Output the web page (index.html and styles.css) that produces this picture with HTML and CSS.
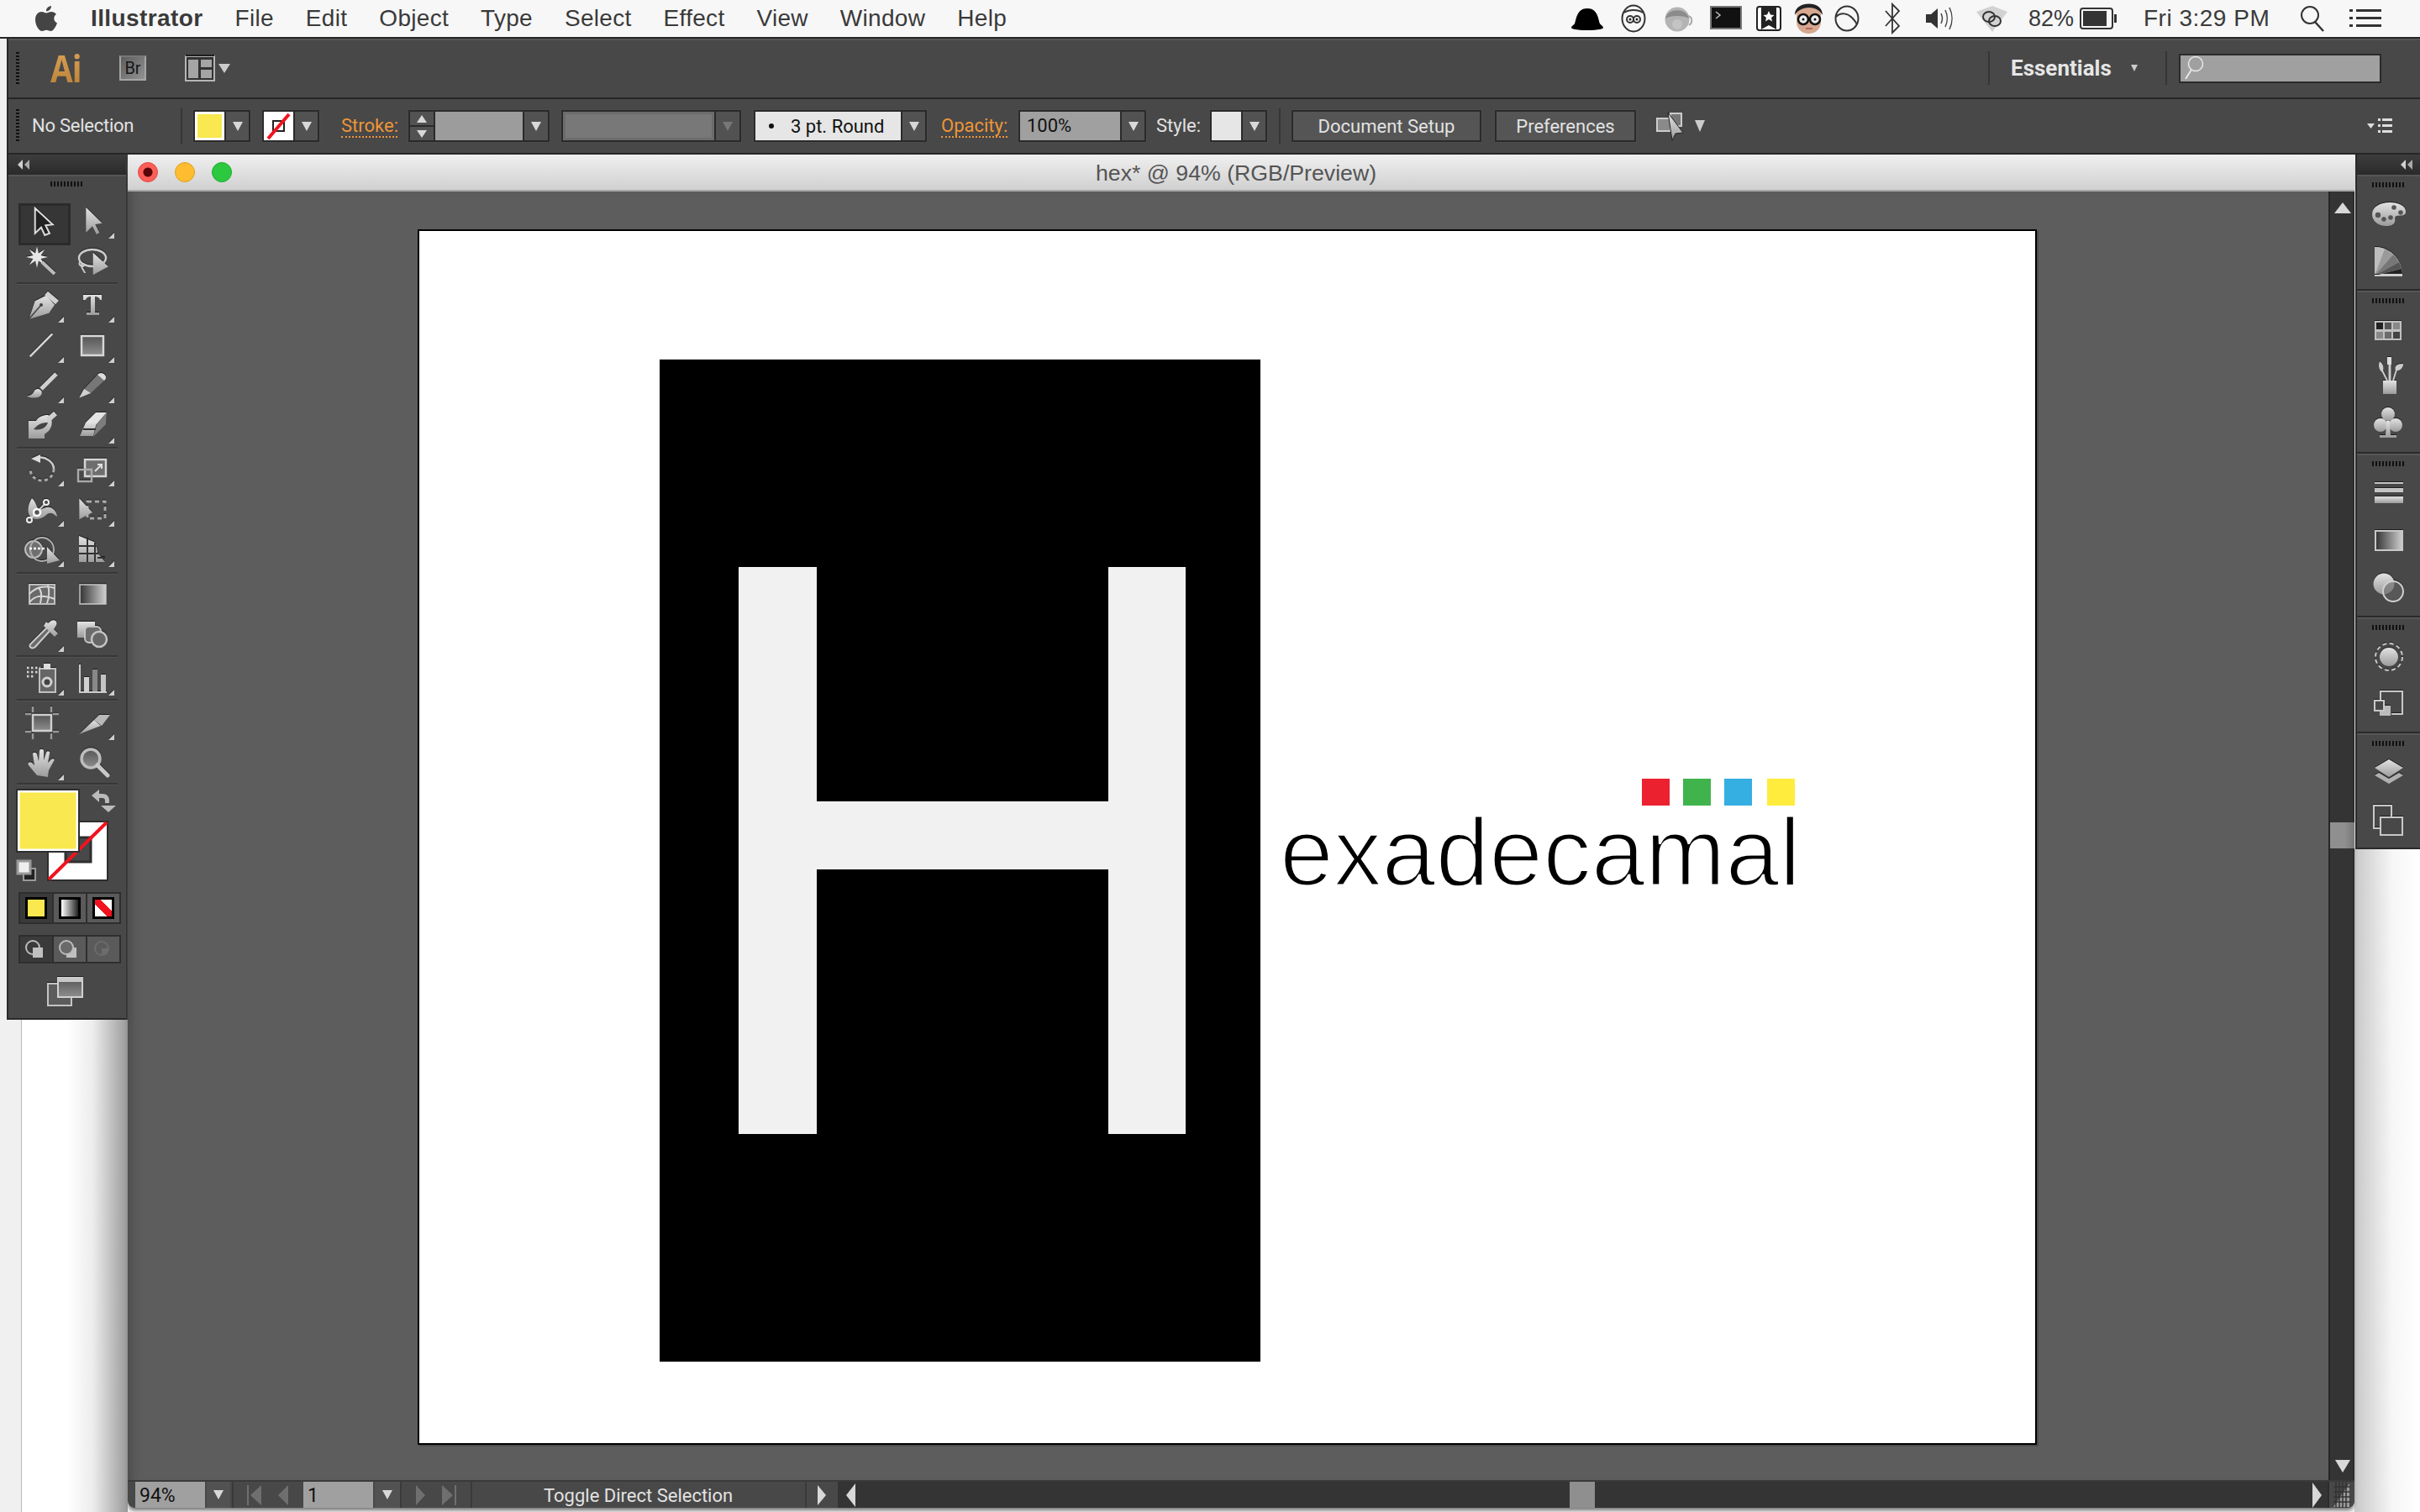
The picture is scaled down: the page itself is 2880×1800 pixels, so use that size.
FILE: index.html
```html
<!DOCTYPE html>
<html lang="en">
<head>
<meta charset="utf-8">
<title>Illustrator</title>
<link rel="stylesheet" href="styles.css">
</head>
<body>
<svg class="defs" aria-hidden="true"><defs>
<linearGradient id="ig" x1="0" y1="0" x2="0" y2="1"><stop offset="0" stop-color="#e2e2e2"/><stop offset="1" stop-color="#9c9c9c"/></linearGradient>
<linearGradient id="ih" x1="0" y1="0" x2="0" y2="1"><stop offset="0" stop-color="#555"/><stop offset="1" stop-color="#8e8e8e"/></linearGradient>
<linearGradient id="ix" x1="0" y1="0" x2="1" y2="0"><stop offset="0" stop-color="#333"/><stop offset="1" stop-color="#cfcfcf"/></linearGradient>
</defs></svg>

<header class="menubar">
  <svg class="apple" viewBox="0 0 26 32"><path d="M19 1c.3 3-2.600 6.600-6 6.300C12.700 4.300 15.700 1.200 19 1zM25 11c-4 2.500-3.500 8.500 1 10.400-1.500 4-4.500 9.600-7.500 9.600-2 0-3-1.300-5.300-1.300S10 31 8 31C4 31 0 23.500 0 17.500 0 11 4 8 7.500 8c2.300 0 4 1.500 5.500 1.500S16.500 8 19 8c2.500 0 4.600 1 6 3z"/></svg>
  <nav class="menus">
    <span class="app-name">Illustrator</span><span>File</span><span>Edit</span><span>Object</span><span>Type</span><span>Select</span><span>Effect</span><span>View</span><span>Window</span><span>Help</span>
  </nav>
  <div class="extras">
    <svg class="strip" viewBox="0 0 530 44">
      <path d="M1 33c0-2 3-3 4-5 2-4 2-18 15-18s13 14 15 18c1 2 4 3 4 5 0 1-5 3-19 3S1 34 1 33z" fill="#000" transform="translate(1,0)"/>
      <g fill="none" stroke="#333" stroke-width="2"><ellipse cx="76" cy="22" rx="13.500" ry="15.500"/><path d="M65 15c6-4 16-4 22 0"/><circle cx="72" cy="23" r="4"/><circle cx="80" cy="23" r="4"/></g><circle cx="72" cy="23" r="1.500" fill="#222"/><circle cx="80" cy="23" r="1.500" fill="#222"/>
      <circle cx="128" cy="23" r="14.500" fill="#b4b4b4"/><path d="M114 22c3-13 25-13 28 0-6-4-22-4-28 0z" fill="#8b8b8b"/><circle cx="128" cy="29" r="6" fill="#c4c4c4"/><path d="M141 19c5 1 6 8 1 11" fill="none" stroke="#aaa" stroke-width="2"/>
      <rect x="168" y="8" width="36" height="26" fill="#111" stroke="#777" stroke-width="2"/><path d="M174 14l5 4-5 4" fill="none" stroke="#bbb" stroke-width="1.500"/>
      <rect x="223" y="8" width="28" height="28" rx="3" fill="#fff" stroke="#222" stroke-width="2"/><path d="M228 9h18v26l-9-5-9 5z" fill="#222"/><path d="M237 13l2 4.500 4.500.500-3.500 3 1 4.500-4-2.500-4 2.500 1-4.500-3.500-3 4.500-.500z" fill="#fff"/>
      <path d="M270 12c2-9 27-9 29 0v14c0 8-6 14-14.500 14S270 34 270 26z" fill="#d6a88f"/><path d="M268 18c-1-17 33-19 33 0-3-6-10-9-16-9s-14 3-17 9z" fill="#222"/><g fill="#eee" stroke="#111" stroke-width="2.500"><circle cx="278" cy="23" r="6"/><circle cx="292" cy="23" r="6"/></g><circle cx="278" cy="23" r="1.500" fill="#111"/><circle cx="292" cy="23" r="1.500" fill="#111"/><path d="M281 34h8" stroke="#a55" stroke-width="1.500"/>
      <g fill="none" stroke="#333" stroke-width="2"><ellipse cx="330" cy="22" rx="13.500" ry="14.500"/><path d="M317 20c6-6 14-4 19 1 3 3 5 6 6 8"/></g>
      <path d="M376 13l16 18-8 8V5l8 8-16 18" fill="none" stroke="#333" stroke-width="1.800"/>
      <path d="M424 17h6l8-7v24l-8-7h-6z" fill="#333"/><path d="M442 16c2 4 2 8 0 12M447 12c3 6 3 14 0 20M452 9c4 8 4 18 0 26" fill="none" stroke="#444" stroke-width="1.500"/>
      <path d="M484 14l19-7 18 7-18 24z" fill="#d2d2d2"/><g fill="none" stroke="#333" stroke-width="2"><ellipse cx="499" cy="20" rx="7" ry="6"/><ellipse cx="506" cy="25" rx="7" ry="6"/></g>
    </svg>
    <span class="pct">82%</span>
    <svg class="battery" viewBox="0 0 46 26"><rect x="1" y="1" width="38" height="24" rx="3" fill="none" stroke="#333" stroke-width="2"/><rect x="4" y="4" width="28" height="18" fill="#333"/><rect x="41" y="8" width="3" height="10" fill="#333"/></svg>
    <span class="clock">Fri 3:29 PM</span>
    <svg class="spot" viewBox="0 0 30 32"><circle cx="12" cy="12" r="10" fill="none" stroke="#333" stroke-width="2"/><path d="M18 20l10 11" stroke="#333" stroke-width="2.500"/></svg>
    <svg class="notif" viewBox="0 0 38 24"><g fill="#333"><rect x="0" y="1" width="4" height="3"/><rect x="8" y="1" width="30" height="3"/><rect x="0" y="10" width="4" height="3"/><rect x="8" y="10" width="30" height="3"/><rect x="0" y="19" width="4" height="3"/><rect x="8" y="19" width="30" height="3"/></g></svg>
  </div>
</header>

<div class="chrome">
  <section class="appbar">
    <i class="grip-v"></i>
    <span class="ai-logo">Ai</span>
    <span class="br-logo">Br</span>
    <svg class="layout-ic" viewBox="0 0 36 32"><rect x="1" y="2" width="34" height="29" fill="#333" stroke="#b5b5b5" stroke-width="2"/><path d="M1 1h34" stroke="#1f1f1f" stroke-width="2"/><g fill="#a5a5a5"><rect x="4" y="6" width="12" height="22"/><rect x="19" y="6" width="13" height="9"/><rect x="19" y="18" width="13" height="10"/></g></svg>
    <i class="tri tri-layout"></i>
    <div class="app-right">
      <i class="vsep"></i>
      <span class="essentials">Essentials</span>
      <i class="tri tri-small"></i>
      <i class="vsep vsep-b"></i>
      <div class="search"><svg class="search-ic" viewBox="0 0 24 30"><circle cx="14" cy="10" r="8.500" fill="none" stroke="#e8e8e8" stroke-width="1.500"/><path d="M9 17L2 28" stroke="#e8e8e8" stroke-width="2"/></svg></div>
    </div>
  </section>

  <section class="controlbar">
    <i class="grip-c"></i>
    <span class="t nosel">No Selection</span>
    <i class="csep"></i>
    <div class="combo w-swatch m13"><i class="swatch-fill"></i><i class="arrow"></i></div>
    <div class="combo w-swatch m14"><svg class="swatch-stroke" viewBox="0 0 35 34"><rect width="35" height="34" fill="#fff"/><rect x="11" y="11" width="13" height="12" fill="none" stroke="#222" stroke-width="2"/><path d="M5 32L30 3" stroke="#f0131f" stroke-width="4"/></svg><i class="arrow"></i></div>
    <span class="link l-stroke">Stroke:</span>
    <div class="combo w-spin"><div class="spin"><i class="up"></i><i class="down"></i></div><i class="field f-grey"></i><i class="arrow"></i></div>
    <div class="combo w-dis"><i class="field f-dis"></i><i class="arrow arrow-off"></i></div>
    <div class="combo w-prof"><div class="field f-light prof"><i class="dot"></i><span>3 pt. Round</span></div><i class="arrow"></i></div>
    <span class="link l-op">Opacity:</span>
    <div class="combo w-op"><div class="field f-grey2 op">100%</div><i class="arrow"></i></div>
    <span class="t l-style">Style:</span>
    <div class="combo w-swatch m13"><i class="field f-light"></i><i class="arrow"></i></div>
    <i class="csep csep-b"></i>
    <button class="btn b-doc">Document Setup</button>
    <button class="btn b-pref">Preferences</button>
    <svg class="align-ic" viewBox="0 0 32 34"><rect x="1" y="8" width="16" height="15" fill="#8a8a8a" stroke="#ccc" stroke-width="2"/><rect x="17" y="2" width="13" height="15" fill="#777" stroke="#ccc" stroke-width="2"/><path d="M14 1l18 24-9 1-4 8z" fill="url(#ig)" stroke="#222" stroke-width="1"/></svg>
    <i class="tri tri-align"></i>
    <svg class="pm-ic" viewBox="0 0 30 20"><path d="M0 7h9l-4.500 6z" fill="#ddd"/><g fill="#ddd"><rect x="13" y="1" width="3" height="3"/><rect x="18" y="1" width="12" height="3"/><rect x="13" y="8" width="3" height="3"/><rect x="18" y="8" width="12" height="3"/><rect x="13" y="15" width="3" height="3"/><rect x="18" y="15" width="12" height="3"/></g></svg>
  </section>

  <main class="workspace">
    <aside class="leftcol">
      <div class="toolcol">
        <div class="collapse"><i class="dbl"></i></div>
        <div class="toolbox">
          <i class="handle handle-tools"></i>
          <div class="tools s1">
            <div class="tool on"><svg class="ic" viewBox="0 0 60 48"><path d="M21.700 8.700v30l7.300-7 4.300 9.300 5.700-2.300-4.700-9.400 8.400-1z" fill="#222" stroke="#ddd" stroke-width="2"/></svg></div>
            <div class="tool"><svg class="ic" viewBox="0 0 60 48"><path d="M22.300 7.700v30l7.700-7.400 5 9.700 3.300-2.300-5-9.700 8.400-1.300z" fill="url(#ig)"/><path class="c" d="M56 38v7h-7z"/></svg></div>
            <div class="tool"><svg class="ic" viewBox="0 0 60 48"><path d="M37 19l-8.400-1.900 4.600-7.300-7.300 4.600L24 6l-1.900 8.400-7.300-4.600 4.600 7.300L11 19l8.400 1.900-4.600 7.300 7.300-4.600L24 32l1.900-8.400 7.300 4.600-4.600-7.300z" fill="#e6e6e6"/><path d="M30 25l15 14" stroke="#bbb" stroke-width="4"/></svg></div>
            <div class="tool"><svg class="ic" viewBox="0 0 60 48"><ellipse cx="30" cy="20" rx="16" ry="10" fill="none" stroke="#ccc" stroke-width="2.500"/><path d="M15 24c-2 5 3 7 5 5s-4-3-3 1 4 6 4 8" fill="none" stroke="#ccc" stroke-width="2"/><path d="M30.700 13.700v26.600L49 30.300z" fill="url(#ig)"/></svg></div>
          </div>
          <div class="tools s2">
            <div class="tool"><svg class="ic" viewBox="0 0 60 48"><path d="M14.300 41l7.400-21.700L35 12.700l10 11-6.700 10z" fill="url(#ig)"/><path d="M14.300 41L29 24" stroke="#444" stroke-width="1.500"/><circle cx="29" cy="24" r="2" fill="#444"/><path d="M35 10l13 11" stroke="#d0d0d0" stroke-width="6"/><path class="c" d="M56 38v7h-7z"/></svg></div>
            <div class="tool"><svg class="ic" viewBox="0 0 60 48"><path d="M19 18v-6h22v6h-2c-1-3-3-4-6-4v19h5v3H23v-3h5V14c-3 0-5 1-6 4z" fill="url(#ig)"/><path class="c" d="M56 38v7h-7z"/></svg></div>
            <div class="tool"><svg class="ic" viewBox="0 0 60 48"><path d="M15.700 37.300L42.300 10.300" stroke="#d4d4d4" stroke-width="2.500"/><path class="c" d="M56 38v7h-7z"/></svg></div>
            <div class="tool"><svg class="ic" viewBox="0 0 60 48"><rect x="17" y="13" width="26" height="23" fill="url(#ih)" stroke="#d8d8d8" stroke-width="2.500"/><path class="c" d="M56 38v7h-7z"/></svg></div>
            <div class="tool"><svg class="ic" viewBox="0 0 60 48"><path d="M29 28L47 10" stroke="#d0d0d0" stroke-width="5"/><path d="M12 36c5 0 7-2 9-6 3-3 6-2 8 0 2 3 0 7-4 8-5 1-10 1-13-2z" fill="url(#ig)"/><path class="c" d="M56 38v7h-7z"/></svg></div>
            <div class="tool"><svg class="ic" viewBox="0 0 60 48"><path d="M14.300 38.500L20 28l16-17c3-3 9-2 10 3 0 2-1 3-2 4L28 33z" fill="#777"/><path d="M36 11c3-3 9-2 10 3 0 2-1 3-2 4z" fill="#ddd"/><path d="M14.300 38.500L20 28l8 5z" fill="#d0d0d0"/><path class="c" d="M56 38v7h-7z"/></svg></div>
            <div class="tool"><svg class="ic" viewBox="0 0 60 48"><path d="M14 18h9c3-5 8-7 14-7l3 2c3 6 2 12-2 17l-5 4v5H14z" fill="url(#ig)"/><path d="M20 28c4-4 7-8 17-8-2 6-8 10-17 8z" fill="#444"/><path d="M37 17l9-8" stroke="#cfcfcf" stroke-width="6"/></svg></div>
            <div class="tool"><svg class="ic" viewBox="0 0 60 48"><path d="M22 20L34 8h13L35 22z" fill="#e4e4e4"/><path d="M22 20h13l-4 16H15z" fill="url(#ig)"/><path d="M35 22L47 8l-1 14-15 15z" fill="#7d7d7d"/><path d="M19 28h15" stroke="#333" stroke-width="2"/><path class="c" d="M56 38v7h-7z"/></svg></div>
          </div>
          <div class="tools s3">
            <div class="tool"><svg class="ic" viewBox="0 0 60 48"><path d="M25 11c9-2 19 5 19 13" fill="none" stroke="#ccc" stroke-width="2.500"/><path d="M44 24c0 8-6 14-14 14s-14-6-14-14" fill="none" stroke="#aaa" stroke-width="3" stroke-dasharray="4 3.500"/><path d="M17 12l11-5v10z" fill="#ddd"/><path class="c" d="M56 38v7h-7z"/></svg></div>
            <div class="tool"><svg class="ic" viewBox="0 0 60 48"><rect x="21" y="13" width="25" height="20" fill="#6e6e6e" stroke="#d6d6d6" stroke-width="2.500"/><rect x="13" y="25" width="16" height="14" fill="none" stroke="#aaa" stroke-width="2.500"/><path d="M33 27l8-8m-5 0h5v5" fill="none" stroke="#e0e0e0" stroke-width="2"/><path class="c" d="M56 38v7h-7z"/></svg></div>
            <div class="tool"><svg class="ic" viewBox="0 0 60 48"><path d="M18 11c-5 8-6 16-2 22 6 5 14 3 19-2 3-3 7-3 10 0l3 2c0-6-6-13-13-11-4 1-6 3-9 2-3-2-3-9-8-13z" fill="url(#ig)"/><path d="M15 37l20-21" stroke="#ccc" stroke-width="2"/><g fill="#444" stroke="#f0f0f0" stroke-width="2"><circle cx="15" cy="37" r="3"/><circle cx="35" cy="16" r="3"/></g><circle cx="24" cy="28" r="4" fill="#555" stroke="#fff" stroke-width="2.500"/><path class="c" d="M56 38v7h-7z"/></svg></div>
            <div class="tool"><svg class="ic" viewBox="0 0 60 48"><rect x="24" y="15" width="21" height="20" fill="none" stroke="#aaa" stroke-width="3" stroke-dasharray="5 4"/><path d="M14.300 11.300v25L30 28z" fill="url(#ig)"/><path class="c" d="M56 38v7h-7z"/></svg></div>
            <div class="tool"><svg class="ic" viewBox="0 0 60 48"><circle cx="20" cy="24" r="10" fill="#6f6f6f" stroke="#bbb" stroke-width="2"/><circle cx="30" cy="24" r="14" fill="none" stroke="#b0b0b0" stroke-width="2"/><path d="M15 23h20" stroke="#fff" stroke-width="2.500" stroke-dasharray="3 2"/><path d="M36 21v20l15-4z" fill="url(#ig)"/><path class="c" d="M56 38v7h-7z"/></svg></div>
            <div class="tool"><svg class="ic" viewBox="0 0 60 48"><path d="M14 8l20 8 2 12 9 11H14z" fill="url(#ig)"/><path d="M24 11v28M33 16v23M14 20h21M14 29h23M36 34h9" stroke="#333" stroke-width="2"/><path class="c" d="M56 38v7h-7z"/></svg></div>
          </div>
          <div class="tools s4">
            <div class="tool"><svg class="ic" viewBox="0 0 60 48"><rect x="15" y="13" width="30" height="23" fill="#6a6a6a" stroke="#bdbdbd" stroke-width="2"/><path d="M15 24c9-9 18-10 30-7M15 34c6-7 12-10 30-4M25 16c5 4 5 10 3 19M37 13c2 8 2 14-1 22" fill="none" stroke="#d6d6d6" stroke-width="2"/></svg></div>
            <div class="tool"><svg class="ic" viewBox="0 0 60 48"><rect x="15" y="13" width="31" height="23" fill="url(#ix)" stroke="#c8c8c8" stroke-width="1.500"/></svg></div>
            <div class="tool"><svg class="ic" viewBox="0 0 60 48"><path d="M37 15L16 36c-2 4 3 6 6 3l19-21" fill="#6b6b6b" stroke="#ccc" stroke-width="2"/><path d="M32 14l13 13 4-4-5-5 3-5c2-5-3-7-6-5l-4 3-2-2z" fill="url(#ig)"/><path class="c" d="M56 38v7h-7z"/></svg></div>
            <div class="tool"><svg class="ic" viewBox="0 0 60 48"><rect x="12" y="9" width="21" height="19" fill="url(#ig)"/><rect x="21" y="15" width="19" height="19" rx="5" fill="#6d6d6d" stroke="#c4c4c4" stroke-width="2"/><circle cx="38" cy="30" r="9" fill="#666" stroke="#c4c4c4" stroke-width="2.500"/></svg></div>
          </div>
          <div class="tools s5">
            <div class="tool"><svg class="ic" viewBox="0 0 60 48"><rect x="27" y="13" width="19" height="28" fill="#666" stroke="#c0c0c0" stroke-width="2"/><rect x="32" y="7" width="8" height="7" fill="#ddd"/><circle cx="36" cy="29" r="5" fill="#444" stroke="#d0d0d0" stroke-width="3"/><path d="M12 12h16M12 17h14M12 22h10" stroke="#cfcfcf" stroke-width="3" stroke-dasharray="2.500 2.500"/><path class="c" d="M56 38v7h-7z"/></svg></div>
            <div class="tool"><svg class="ic" viewBox="0 0 60 48"><path d="M15 8v33h32" fill="none" stroke="#ccc" stroke-width="2"/><rect x="20" y="23" width="6" height="17" fill="#d0d0d0"/><rect x="30" y="14" width="6" height="26" fill="#888"/><rect x="40" y="20" width="6" height="20" fill="#c4c4c4"/><path class="c" d="M56 38v7h-7z"/></svg></div>
          </div>
          <div class="tools s6">
            <div class="tool"><svg class="ic" viewBox="0 0 60 48"><rect x="19" y="15" width="22" height="19" fill="url(#ih)" stroke="#cfcfcf" stroke-width="2.500"/><path d="M10 14h7M10 35h7M43 14h7M43 35h7M19 5v7M19 37v7M41 5v7M41 37v7" stroke="#999" stroke-width="2.500"/></svg></div>
            <div class="tool"><svg class="ic" viewBox="0 0 60 48"><path d="M14 38l18-17 8 7z" fill="url(#ig)"/><path d="M32 21l6-6h13L41 28z" fill="#b8b8b8"/><path class="c" d="M56 38v7h-7z"/></svg></div>
            <div class="tool"><svg class="ic" viewBox="0 0 60 48"><path d="M24 39L14 27c-2-3 1-5 4-3l3 3-2-13c0-3 4-3 5 0l2 8 1-12c0-3 5-3 5 0v11l3-9c1-3 5-2 4 1l-2 11 4-4c2-2 5 0 3 2l-6 11-1 8z" fill="url(#ig)"/><path class="c" d="M56 38v7h-7z"/></svg></div>
            <div class="tool"><svg class="ic" viewBox="0 0 60 48"><circle cx="28" cy="19" r="11" fill="url(#ih)" stroke="#bdbdbd" stroke-width="3.500"/><path d="M36 27l12 12" stroke="#c8c8c8" stroke-width="5" stroke-linecap="round"/></svg></div>
          </div>
          <svg class="fillstroke" viewBox="0 0 124 112">
            <rect x="37" y="39" width="71" height="70" fill="#fff" stroke="#2e2e2e" stroke-width="2"/>
            <rect x="58" y="58" width="30" height="29" fill="#484848" stroke="#2e2e2e" stroke-width="3"/>
            <path d="M38 108L107 40" stroke="#f0131f" stroke-width="4"/>
            <rect x="2" y="3" width="70" height="70" fill="#f9e84f" stroke="#fff" stroke-width="3"/>
            <rect x="0" y="1" width="74" height="74" fill="none" stroke="#2e2e2e" stroke-width="2"/>
            <path d="M89 8l9-7v5h4c5 0 8 3 8 8v3h-5v-3c0-2-1-3-3-3h-4v5z" fill="#bbb"/><path d="M100 20h18l-9 8z" fill="#bbb"/>
            <rect x="8" y="95" width="14" height="14" fill="#222" stroke="#999" stroke-width="2"/>
            <rect x="1" y="86" width="15" height="15" fill="#eee" stroke="#999" stroke-width="3"/>
          </svg>
          <div class="modes m-a">
            <div class="mode on"><i class="mini m-yellow"></i></div>
            <div class="mode"><i class="mini m-grad"></i></div>
            <div class="mode"><i class="mini m-none"></i></div>
          </div>
          <div class="modes m-b">
            <div class="mode on"><svg class="dm" viewBox="0 0 30 26"><circle cx="11" cy="11" r="8" fill="none" stroke="#bbb" stroke-width="2"/><rect x="11" y="11" width="12" height="12" fill="#c0c0c0"/></svg></div>
            <div class="mode"><svg class="dm" viewBox="0 0 30 26"><rect x="11" y="11" width="12" height="12" fill="#c0c0c0"/><circle cx="11" cy="11" r="8" fill="#6a6a6a" stroke="#bbb" stroke-width="2"/></svg></div>
            <div class="mode"><svg class="dm" viewBox="0 0 30 26"><circle cx="13" cy="12" r="8" fill="none" stroke="#6c6c6c" stroke-width="2"/><rect x="13" y="12" width="7" height="7" fill="#6c6c6c"/></svg></div>
          </div>
          <svg class="ic screenmode" viewBox="0 0 44 36"><rect x="1" y="9" width="28" height="26" fill="#5c5c5c" stroke="#c4c4c4" stroke-width="2"/><rect x="13" y="2" width="29" height="23" fill="url(#ih)" stroke="#d0d0d0" stroke-width="2"/><rect x="13" y="2" width="29" height="5" fill="#c8c8c8"/></svg>
        </div>
      </div>
      <div class="behind"></div>
    </aside>

    <section class="doc">
      <div class="doctitle">
        <div class="lights"><i class="l-red"></i><i class="l-amber"></i><i class="l-green"></i></div>
        <span class="doctitle-text">hex* @ 94% (RGB/Preview)</span>
      </div>
      <div class="docmain">
        <div class="canvas">
          <div class="artboard">
            <div class="black-rect">
              <i class="h-left"></i><i class="h-right"></i><i class="h-bar"></i>
            </div>
            <div class="dots"><i class="d-red"></i><i class="d-green"></i><i class="d-blue"></i><i class="d-yellow"></i></div>
            <span class="wordmark">exadecamal</span>
          </div>
        </div>
        <div class="vscroll">
          <i class="v-up"></i>
          <i class="v-thumb"></i>
          <i class="v-down"></i>
        </div>
      </div>
      <footer class="statusbar">
        <div class="st-combo st-zoom"><span class="st-field">94%</span><i class="arrow"></i></div>
        <div class="st-nav"><svg class="nav-ic" viewBox="0 0 84 26"><g fill="#6f6f6f"><rect x="17" y="1" width="2" height="24"/><path d="M34 1v24L21 13zM66 1v24L54 13z"/></g></svg></div>
        <div class="st-combo st-page"><span class="st-field">1</span><i class="arrow"></i></div>
        <div class="st-nav"><svg class="nav-ic" viewBox="0 0 84 26"><g fill="#6f6f6f"><path d="M19 1v24l11-12zM50 1v24l13-12z"/><rect x="65" y="1" width="2" height="24"/></g></svg></div>
        <div class="st-label">Toggle Direct Selection</div>
        <div class="st-next"><i class="tri-r"></i></div>
        <div class="hscroll"><i class="tri-l"></i><i class="h-thumb"></i><i class="tri-r tri-end"></i></div>
        <div class="resize"><svg viewBox="0 0 20 32" class="resize-ic"><path d="M19 2v28H0z" fill="#9a9a9a"/><path d="M3 0v32M7 0v32M11 0v32M15 0v32M0 6h20M0 12h20M0 18h20M0 24h20" stroke="#333" stroke-width="1.500"/></svg></div>
      </footer>
    </section>

    <aside class="rightcol">
      <div class="rp-col">
        <div class="collapse collapse-r"><i class="dbl"></i></div>
        <div class="rp-group pb5">
          <i class="handle"></i>
          <div class="rp"><svg class="ic" viewBox="0 0 60 56"><path d="M10 28c0-9 10-14 21-14s19 4 19 11c0 6-7 4-11 5-3 1-1 4-2 7-1 4-6 5-10 5-10 0-17-6-17-14z" fill="url(#ig)"/><g fill="#555"><circle cx="36" cy="20" r="2.800"/><circle cx="44" cy="26" r="2.800"/><circle cx="17" cy="29" r="3.200"/><circle cx="24" cy="34" r="2.800"/><circle cx="32" cy="32" r="2.800"/></g></svg></div>
          <div class="rp"><svg class="ic" viewBox="0 0 60 56"><path d="M13 45V11a33 33 0 0 1 33 34z" fill="#d2d2d2"/><path d="M13 45V11a33 33 0 0 1 12 2z" fill="#bdbdbd"/><path d="M13 45L25 13a33 33 0 0 1 10 7z" fill="#9a9a9a"/><path d="M13 45l22-25a33 33 0 0 1 7 9z" fill="#777"/><path d="M13 45l29-16a33 33 0 0 1 3 8z" fill="#555"/><path d="M13 45l32-8a33 33 0 0 1 1 6H13z" fill="#222"/><path d="M13 45h33" stroke="#ccc" stroke-width="2"/></svg></div>
        </div>
        <div class="rp-group pb5">
          <i class="handle"></i>
          <div class="rp"><svg class="ic" viewBox="0 0 60 56"><rect x="13" y="17" width="32" height="23" fill="#c0c0c0"/><rect x="15" y="19" width="8" height="8" fill="#222"/><rect x="25" y="19" width="8" height="8" fill="#555"/><rect x="35" y="19" width="8" height="8" fill="#888"/><rect x="15" y="30" width="8" height="8" fill="#888"/><rect x="25" y="30" width="8" height="8" fill="#6b6b6b"/><rect x="35" y="30" width="8" height="8" fill="#444"/></svg></div>
          <div class="rp"><svg class="ic" viewBox="0 0 60 56"><rect x="23" y="32" width="16" height="16" fill="url(#ig)"/><path d="M28 32L22 20" stroke="#ccc" stroke-width="2"/><path d="M22 22c-4-3-5-8-3-13 4 3 6 8 3 13z" fill="#ccc"/><path d="M31 32V10" stroke="#ccc" stroke-width="3"/><rect x="28" y="4" width="5" height="9" fill="#ddd"/><path d="M35 32l4-13" stroke="#ccc" stroke-width="2"/><path d="M38 20c-2-5 1-8 9-8 0 5-4 9-9 8z" fill="#ccc"/></svg></div>
          <div class="rp"><svg class="ic" viewBox="0 0 60 56"><g fill="url(#ig)"><circle cx="29" cy="16" r="8"/><circle cx="20" cy="29" r="8"/><circle cx="38" cy="29" r="8"/><path d="M27 24h4l1 17h7v3H19v-3h7z"/></g></svg></div>
        </div>
        <div class="rp-group pb6">
          <i class="handle"></i>
          <div class="rp"><svg class="ic" viewBox="0 0 60 56"><rect x="13" y="15" width="34" height="2" fill="#c4c4c4"/><rect x="13" y="22" width="34" height="5" fill="#c4c4c4"/><rect x="13" y="32" width="34" height="8" fill="url(#ig)"/></svg></div>
          <div class="rp"><svg class="ic" viewBox="0 0 60 56"><rect x="14" y="17" width="32" height="23" fill="url(#ix)" stroke="#c8c8c8" stroke-width="2"/></svg></div>
          <div class="rp"><svg class="ic" viewBox="0 0 60 56"><circle cx="24" cy="24" r="12.500" fill="url(#ig)"/><circle cx="35" cy="33" r="12" fill="#6f6f6f" fill-opacity=".65" stroke="#d0d0d0" stroke-width="2"/></svg></div>
        </div>
        <div class="rp-group pb5">
          <i class="handle"></i>
          <div class="rp"><svg class="ic" viewBox="0 0 60 56"><circle cx="30" cy="28" r="11" fill="url(#ig)"/><circle cx="30" cy="28" r="16" fill="none" stroke="#c8c8c8" stroke-width="2" stroke-dasharray="5 3.400"/></svg></div>
          <div class="rp"><svg class="ic" viewBox="0 0 60 56"><path d="M20 26V13h26v27H33" fill="none" stroke="#c8c8c8" stroke-width="2"/><rect x="19" y="30" width="13" height="12" fill="#bbb"/><rect x="13" y="24" width="11" height="12" fill="#484848" stroke="#c8c8c8" stroke-width="2"/></svg></div>
        </div>
        <div class="rp-group pb5 last">
          <i class="handle"></i>
          <div class="rp"><svg class="ic" viewBox="0 0 60 56"><path d="M13 31l17 10 17-10-5-3-12 7-12-7z" fill="#b0b0b0"/><path d="M13 22l17-10 17 10-17 11z" fill="url(#ig)"/></svg></div>
          <div class="rp"><svg class="ic" viewBox="0 0 60 56"><rect x="12" y="11" width="21" height="27" fill="none" stroke="#c8c8c8" stroke-width="2"/><rect x="20" y="25" width="26" height="21" fill="#484848" stroke="#c8c8c8" stroke-width="2"/></svg></div>
        </div>
      </div>
      <div class="behind-r"></div>
    </aside>
  </main>
</div>
</body>
</html>
```
FILE: styles.css
```css
* { box-sizing: border-box; }
html, body { margin: 0; padding: 0; }
body {
  width: 2880px; height: 1800px; overflow: hidden;
  background: #f0f0f0;
  font-family: "Roboto", "Liberation Sans", sans-serif;
  display: flex; flex-direction: column;
}
i { display: block; font-style: normal; }
.defs { position: absolute; width: 0; height: 0; }

/* mac menu bar */
.menubar {
  height: 44px; flex: none; display: flex; align-items: center;
  background: #f7f7f7; color: #3a3a3a;
  font-family: "Liberation Sans", Arial, sans-serif; font-size: 28px; letter-spacing: .3px;
}
.apple { width: 26px; height: 32px; margin-left: 42px; fill: #444; flex: none; }
.menus { display: flex; gap: 38px; margin-left: 40px; white-space: nowrap; }
.app-name { font-weight: 700; letter-spacing: .4px; }
.extras { margin-left: auto; display: flex; align-items: center; }
.strip { width: 530px; height: 44px; flex: none; }
.pct { margin-left: 16px; width: 54px; letter-spacing: 0; font-size: 27px; }
.battery { width: 46px; height: 26px; margin-left: 7px; flex: none; }
.clock { margin-left: 30px; width: 150px; white-space: nowrap; letter-spacing: .5px; }
.spot { width: 30px; height: 32px; margin-left: 36px; flex: none; }
.notif { width: 38px; height: 24px; margin-left: 29px; margin-right: 46px; flex: none; }

/* app frame */
.chrome { flex: 1; display: flex; flex-direction: column; min-height: 0; padding-top: 2px; background: linear-gradient(#262626 0 2px, transparent 2px); }
.appbar, .controlbar {
  margin-left: 8px; flex: none; display: flex; align-items: center;
  background: #484848; border-left: 2px solid #262626;
  box-shadow: inset 0 2px 0 #565656;
}
.appbar { height: 72px; border-bottom: 2px solid #262626; }
.controlbar { height: 66px; border-bottom: 2px solid #262626; box-shadow: none; color: #e2e2e2; }
.grip-v, .grip-c {
  width: 4px; background: repeating-linear-gradient(#111 0 2px, transparent 2px 4px); flex: none;
}
.grip-v { height: 38px; margin-left: 9px; }
.grip-c { height: 40px; margin-left: 9px; }
.ai-logo {
  margin-left: 37px; width: 40px; font-family: "Open Sans", sans-serif; font-weight: 700; font-size: 44px; line-height: 44px;
  background: linear-gradient(#dca05a, #b98435); -webkit-background-clip: text; background-clip: text; color: transparent;
  transform: scaleX(.88); transform-origin: left center; letter-spacing: -1px; white-space: nowrap;
}
.br-logo {
  margin-left: 42px; width: 32px; height: 30px; flex: none;
  background: linear-gradient(135deg, #5d5d5d, #929292); border: 2px solid #a5a5a5; border-top-color: #777;
  color: #161616; font-size: 20px; line-height: 26px; text-align: center;
}
.layout-ic { width: 36px; height: 32px; margin-left: 46px; flex: none; }
.tri { width: 0; height: 0; border-style: solid; border-color: #ccc transparent transparent; flex: none; }
.tri-layout { border-width: 11px 7px 0; margin-left: 4px; }
.tri-small { border-width: 8px 4px 0; margin-left: 21px; }
.tri-align { border-width: 14px 6px 0; margin-left: 14px; }
.app-right { margin-left: auto; display: flex; align-items: center; }
.vsep { width: 2px; height: 40px; background: #353535; flex: none; }
.essentials { margin-left: 25px; width: 122px; font-weight: 700; font-size: 26px; color: #e6e6e6; white-space: nowrap; }
.vsep-b { margin-left: 33px; }
.search {
  margin-left: 14px; margin-right: 46px; width: 241px; height: 35px; background: #a0a0a0;
  border: 2px solid #2a2a2a; display: flex; align-items: center;
}
.search-ic { width: 24px; height: 30px; margin-left: 4px; }

/* control bar */
.t { font-size: 22px; white-space: nowrap; padding-bottom: 2px; }
.nosel { margin-left: 15px; width: 177px; letter-spacing: -.25px; }
.csep { width: 2px; height: 42px; background: #353535; flex: none; }
.csep-b { margin-left: 14px; }
.combo {
  height: 38px; display: flex; gap: 2px; padding: 2px; flex: none;
  background: #2a2a2a; box-shadow: 0 0 0 1px #4c4c4c;
}
.m13 { margin-left: 13px; }
.m14 { margin-left: 14px; }
.w-swatch { width: 68px; }
.swatch-fill { width: 35px; background: #f9e84f; border: 3px solid #fff; flex: none; }
.swatch-stroke { width: 35px; height: 34px; flex: none; }
.arrow {
  flex: 1; background: #525252; display: flex; align-items: center; justify-content: center;
}
.arrow::after {
  content: ""; width: 0; height: 0; border-style: solid;
  border-width: 11px 6px 0; border-color: #d8d8d8 transparent transparent;
}
.arrow-off::after { border-top-color: #777; }
.link {
  font-size: 22px; color: #ed9538; white-space: nowrap; flex: none;
  border-bottom: 2px dotted #ed9538; line-height: 25px;
}
.l-stroke { margin-left: 26px; width: 67px; }
.w-spin { width: 168px; margin-left: 13px; }
.spin { width: 28px; display: flex; flex-direction: column; gap: 2px; flex: none; }
.spin i { flex: 1; background: #525252; display: flex; align-items: center; justify-content: center; }
.spin .up::after { content: ""; border-style: solid; border-width: 0 6px 9px; border-color: transparent transparent #d8d8d8; }
.spin .down::after { content: ""; border-style: solid; border-width: 9px 6px 0; border-color: #d8d8d8 transparent transparent; }
.field { flex: none; }
.f-grey { width: 104px; background: #9c9c9c; }
.w-dis { width: 214px; margin-left: 14px; }
.f-dis { width: 180px; background: #787878; border: 3px solid #6c6c6c; }
.w-prof { width: 206px; margin-left: 15px; }
.f-light { background: #e6e6e6; }
.w-swatch .f-light { width: 35px; border: 3px solid #e6e6e6; }
.prof {
  width: 173px; display: flex; align-items: center; color: #111; font-size: 22px; white-space: nowrap;
}
.dot { width: 6px; height: 6px; background: #111; border-radius: 50%; margin-left: 16px; }
.prof span { margin-left: 20px; }
.l-op { margin-left: 17px; width: 79px; }
.w-op { width: 152px; margin-left: 13px; }
.f-grey2 { background: #a0a0a0; }
.op { width: 119px; color: #111; font-size: 22px; line-height: 33px; padding-left: 8px; }
.l-style { margin-left: 12px; width: 51px; }
.btn {
  height: 38px; flex: none; padding: 0; font: 22px "Roboto", sans-serif; color: #e2e2e2;
  background: #555; border: 2px solid #2a2a2a; box-shadow: 0 0 0 1px #4c4c4c;
}
.b-doc { width: 226px; margin-left: 13px; }
.b-pref { width: 168px; margin-left: 16px; }
.align-ic { width: 32px; height: 34px; margin-left: 24px; flex: none; }
.pm-ic { width: 30px; height: 20px; margin-left: auto; margin-right: 33px; flex: none; }

/* workspace */
.workspace { flex: 1; min-height: 0; display: flex; }
.leftcol {
  width: 152px; flex: none; display: flex; flex-direction: column;
  background: #f0f0f0;
}
.toolcol { margin-left: 8px; width: 144px; flex: none; background: #262626; }
.collapse {
  height: 24px; background: linear-gradient(#3d3d3d, #2a2a2a); display: flex; align-items: center;
  padding-left: 11px; border-left: 2px solid #262626;
}
.dbl { width: 14px; height: 12px; position: relative; }
.dbl::before, .dbl::after {
  content: ""; position: absolute; top: 0; border-style: solid; border-width: 6px 6px 6px 0;
  border-color: transparent #d0d0d0 transparent transparent;
}
.dbl::before { left: 0; }
.dbl::after { left: 8px; border-right-color: #aaa; }
.toolbox {
  height: 1006px; background: #484848; border: 2px solid #2a2a2a; border-top: 0;
  box-shadow: inset 0 2px 0 #565656; display: flex; flex-direction: column;
}
.handle {
  width: 38px; height: 6px; flex: none;
  background: repeating-linear-gradient(90deg, #111 0 2px, transparent 2px 4px);
}
.handle-tools { margin: 8px 0 17px 50px; }
.tools {
  margin-left: 10px; width: 120px; display: grid; grid-template-columns: 60px 60px; grid-auto-rows: 48px;
  border-bottom: 2px solid #363636; box-shadow: 0 1px 0 #525252;
}
.s1 { padding-bottom: 1px; }
.s2 { padding: 1px 0; }
.s3 { padding-bottom: 3px; }
.s4 { padding-bottom: 1px; }
.s5 { padding: 1px 0; }
.s6 { padding-top: 2px; }
.tool { display: flex; align-items: center; justify-content: center; position: relative; }
.tool.on::before {
  content: ""; position: absolute; left: 2px; top: 3px; width: 56px; height: 44px;
  background: #363636; border: 3px solid #2b2b2b;
}
.ic { display: block; width: 60px; height: 48px; position: relative; filter: drop-shadow(0 -1px 0 #1e1e1e); overflow: visible; }
.c { fill: #cfcfcf; }
.fillstroke { display: block; width: 124px; height: 112px; margin: 5px 0 0 10px; overflow: visible; flex: none; }
.modes {
  width: 122px; margin-left: 12px; display: flex; gap: 2px; background: #2e2e2e; padding: 2px; flex: none;
}
.m-a { height: 38px; margin-top: 11px; }
.m-b { height: 34px; margin-top: 13px; }
.mode { flex: 1; background: #5a5a5a; display: flex; align-items: center; justify-content: center; }
.mode.on { background: #3a3a3a; }
.mini { width: 26px; height: 26px; border: 3px solid #000; }
.m-yellow { background: #f9e84f; }
.m-grad { background: linear-gradient(90deg, #fff, #222); }
.m-none { background: linear-gradient(135deg, #fff 0 35%, #f0131f 35% 65%, #fff 65%); transform: scaleX(-1); }
.dm { width: 30px; height: 26px; }
.screenmode { width: 44px; height: 36px; margin: 15px 0 0 46px; flex: none; }
.behind {
  flex: 1; background: linear-gradient(90deg, #f0f0f0 0 25px, #b8b8b8 25px 26px, #fff 26px 80px, #ededed 110px, #9a9a9a 152px);
}

/* document window */
.doc {
  width: 2650px; height: 1611px; flex: none; display: flex; flex-direction: column;
  position: relative; z-index: 1; box-shadow: 0 4px 4px -1px #777; border-radius: 8px;
}
.doctitle {
  height: 44px; flex: none; display: flex; align-items: center;
  background: linear-gradient(#f0f0f0, #d0d0d0); border-bottom: 2px solid #a8a8a8; border-radius: 8px 8px 0 0;
}
.lights { display: flex; gap: 20px; margin-left: 12px; }
.lights i { width: 24px; height: 24px; border-radius: 50%; }
.l-red { background: radial-gradient(circle, #5a0606 0 5px, #fc5e58 6px); border: 1px solid #e0443e; }
.l-amber { background: #febc30; border: 1px solid #dea123; }
.l-green { background: #2cc840; border: 1px solid #1dad2b; }
.doctitle-text {
  margin-left: 1028px; padding-top: 2px; font-family: "Liberation Sans", sans-serif; font-size: 26.700px; color: #555; white-space: nowrap;
}
.docmain { flex: 1; min-height: 0; display: flex; }
.canvas {
  flex: 1; min-width: 0; background: #5d5d5d; padding: 45px 0 0 345px;
  box-shadow: inset 14px 0 12px -10px #4a4a4a;
}
.artboard {
  width: 1927px; height: 1447px; background: #fff; border: 2px solid #000;
  box-shadow: 2px 2px 0 #4c4c4c; position: relative;
}
.black-rect { position: absolute; left: 286px; top: 153px; width: 715px; height: 1193px; background: #000; }
.black-rect i { position: absolute; background: #f1f1f1; }
.h-left { left: 94px; top: 247px; width: 93px; height: 675px; }
.h-right { left: 534px; top: 247px; width: 92px; height: 675px; }
.h-bar { left: 187px; top: 526px; width: 347px; height: 81px; }
.dots i { position: absolute; top: 652px; width: 33px; height: 32px; }
.d-red { left: 1455px; background: #ec2130; }
.d-green { left: 1504px; background: #41b34d; }
.d-blue { left: 1553px; background: #35aee2; }
.d-yellow { left: 1604px; background: #ffec3c; }
.wordmark {
  position: absolute; left: 1024px; top: 682px; font-family: "Liberation Sans", Arial, sans-serif;
  font-size: 115px; line-height: 115px; color: #000; white-space: nowrap;
  -webkit-text-stroke: 3px #fff;
}
.vscroll {
  width: 31px; flex: none; background: #343434; border-left: 2px solid #262626; display: flex; flex-direction: column; align-items: center;
  box-shadow: inset -2px 0 0 #2c2c2c;
}
.v-up { width: 0; height: 0; border-style: solid; border-width: 0 10px 13px; border-color: transparent transparent #d8d8d8; margin-top: 13px; flex: none; }
.v-thumb { width: 29px; height: 31px; background: linear-gradient(90deg, #8f8f8f 60%, #777); margin-top: 725px; flex: none; }
.v-down { width: 0; height: 0; border-style: solid; border-width: 15px 9px 0; border-color: #d8d8d8 transparent transparent; margin-top: auto; margin-bottom: 9px; flex: none; }

/* status bar */
.statusbar {
  height: 33px; flex: none; display: flex; background: #484848; border-top: 2px solid #3a3a3a;
  border-radius: 0 0 8px 8px; color: #e2e2e2; font-size: 22px;
  overflow: hidden;
}
.st-combo { height: 31px; display: flex; flex: none; gap: 2px; }
.st-zoom { width: 113px; margin-left: 9px; }
.st-page { width: 115px; margin-left: 1px; }
.st-field { width: 83px; background: #a0a0a0; color: #111; line-height: 34px; padding-left: 5px; flex: none; font-size: 23px; }
.st-nav { width: 84px; flex: none; margin-left: 2px; display: flex; align-items: center; justify-content: center; border-left: 2px solid #3a3a3a; }
.st-page + .st-nav { width: 82px; margin-left: 0; }
.nav-ic { width: 84px; height: 26px; flex: none; }
.st-label { width: 400px; flex: none; margin-left: 2px; padding-left: 85px; line-height: 34px; white-space: nowrap; border-left: 2px solid #3a3a3a; border-right: 2px solid #3a3a3a; }
.st-next { width: 35px; flex: none; display: flex; align-items: center; justify-content: center; }
.tri-r { width: 0; height: 0; border-style: solid; border-width: 12px 0 12px 10px; border-color: transparent transparent transparent #d8d8d8; flex: none; }
.tri-l { width: 0; height: 0; border-style: solid; border-width: 14px 11px 14px 0; border-color: transparent #d8d8d8 transparent transparent; flex: none; margin-left: 10px; }
.hscroll { flex: 1; min-width: 0; margin-left: 2px; background: #343434; display: flex; align-items: center; }
.h-thumb { width: 30px; height: 31px; background: #8f8f8f; margin-left: 850px; flex: none; }
.tri-end { margin-left: auto; margin-right: 7px; border-width: 15px 0 15px 11px; }
.resize { width: 32px; flex: none; display: flex; align-items: center; justify-content: center; border-left: 2px solid #2c2c2c; background: #484848; }
.resize-ic { width: 20px; height: 32px; }

/* right dock */
.rightcol { flex: 1; min-width: 0; display: flex; flex-direction: column; background: #fff; }
.rp-col { flex: none; margin-left: 1px; border-left: 2px solid #262626; background: #262626; }
.collapse-r { justify-content: flex-end; padding: 0 9px 0 0; border-left: 0; }
.rp-group { background: #484848; box-shadow: inset 0 2px 0 #565656; border-bottom: 2px solid #2a2a2a; padding-top: 9px; }
.rp-group .handle { margin: 0 0 4px 18px; }
.pb5 { padding-bottom: 5px; }
.pb6 { padding-bottom: 6px; }
.rp { height: 56px; padding-left: 8px; }
.rp .ic { height: 56px; }
.behind-r { flex: 1; background: linear-gradient(90deg, #c8c8c8, #f6f6f6 45px, #fff); }
```
